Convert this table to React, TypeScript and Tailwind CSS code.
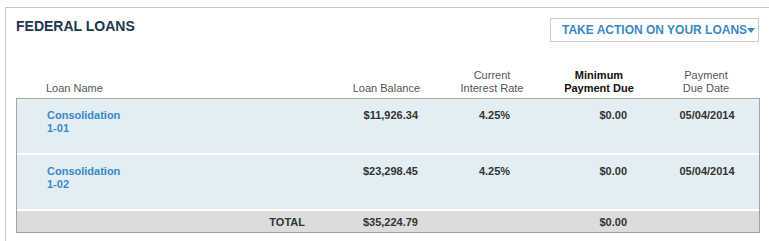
import React from 'react';

interface Loan {
  name: string;
  code: string;
  balance: string;
  rate: string;
  minDue: string;
  dueDate: string;
}

const loans: Loan[] = [
  { name: 'Consolidation', code: '1-01', balance: '$11,926.34', rate: '4.25%', minDue: '$0.00', dueDate: '05/04/2014' },
  { name: 'Consolidation', code: '1-02', balance: '$23,298.45', rate: '4.25%', minDue: '$0.00', dueDate: '05/04/2014' },
];

const cols = 'grid grid-cols-[313px_101px_124px_90px_114px]';

const App = () => {
  return (
    <div
      className="w-[769px] h-[241px] overflow-hidden bg-white"
      style={{ fontFamily: '"Liberation Sans", Arial, sans-serif' }}
    >
      <div className="ml-[5px] mt-[7px] w-[766px] h-[260px] border border-[#c6c6c6] px-[10px] pt-[10px]">
        <div className="flex justify-between items-start">
          <h2 className="text-[14px] leading-[16px] font-bold text-[#1c364f]">FEDERAL LOANS</h2>
          <button className="mr-[1px] h-[24px] w-[209px] border border-[#c9c9c9] bg-white flex items-center pl-[11px] text-[12px] font-bold text-[#3b88c5]">
            <span>TAKE ACTION ON YOUR LOANS</span>
            <svg width="8" height="5" viewBox="0 0 8 5" className="mt-[1px]">
              <path d="M0 0 L8 0 L4 5 Z" fill="#3b88c5" />
            </svg>
          </button>
        </div>

        <div className={`${cols} mt-[27px] pb-[3px] text-[11px] leading-[13px] text-[#555]`}>
          <div className="pl-[30px] self-end">Loan Name</div>
          <div className="text-right pr-[10px] self-end">Loan Balance</div>
          <div className="text-center">Current<br />Interest Rate</div>
          <div className="text-center font-bold text-[#111]">Minimum<br />Payment Due</div>
          <div className="text-center pl-[10px]">Payment<br />Due Date</div>
        </div>

        <div className="border border-[#a3a3a3] bg-white flex flex-col gap-[2px] text-[11px] leading-[13px] font-bold text-[#333]">
          {loans.map((loan, i) => (
            <div key={i} className={`${cols} h-[54px] bg-[#e2eef4] pt-[10px]`}>
              <div className="pl-[30px] text-[#3b88c5]">
                {loan.name}
                <br />
                {loan.code}
              </div>
              <div className="text-right pr-[13px]">{loan.balance}</div>
              <div className="text-center pl-[3px]">{loan.rate}</div>
              <div className="text-right pr-[18px]">{loan.minDue}</div>
              <div className="text-center pl-[10px]">{loan.dueDate}</div>
            </div>
          ))}
          <div className={`${cols} h-[21px] bg-[#dcdcdc] pt-[5px]`}>
            <div className="text-right pr-[25px]">TOTAL</div>
            <div className="text-right pr-[13px]">$35,224.79</div>
            <div />
            <div className="text-right pr-[18px]">$0.00</div>
            <div />
          </div>
        </div>
      </div>
    </div>
  );
};

export default App;
